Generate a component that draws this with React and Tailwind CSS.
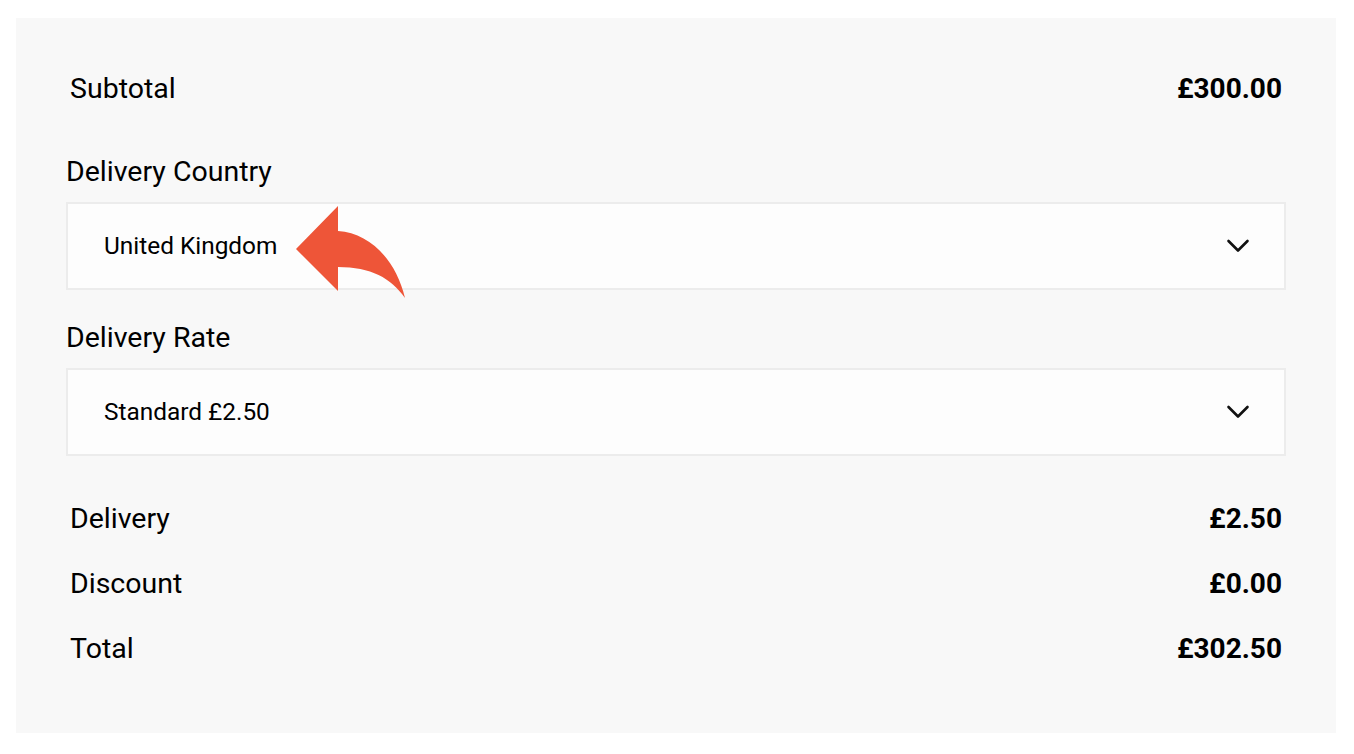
import React from 'react';

const Row = ({ label, value, className = '' }) => (
    <div className={`flex h-[40px] items-center justify-between px-1 pt-[2px] ${className}`}>
        <span className="text-[28.5px] text-black">{label}</span>
        <span className="text-[28px] font-bold text-black">{value}</span>
    </div>
);

const Chevron = () => (
    <svg width="24" height="14" viewBox="0 0 24 14" fill="none" stroke="#111" strokeWidth="2.6" strokeLinecap="round" strokeLinejoin="round">
        <polyline points="2.5,2 12,11.5 21.5,2" />
    </svg>
);

const SelectBox = ({ value, children }) => (
    <div className="relative mt-[10px] flex h-[88px] items-center justify-between border-2 border-[#ececec] bg-[#fdfdfd] pl-[36px] pr-[34px]">
        <span className="text-[24.4px] text-black">{value}</span>
        <Chevron />
        {children}
    </div>
);

const Arrow = () => (
    <svg className="absolute left-[227px] top-[1px]" width="112" height="96" viewBox="0 0 112 96">
        <path
            d="M1 44 L43 1 L43 26 C75 28 101 55 110 93 C96 73 76 62 43 62 L43 86 Z"
            fill="#ee5538"
        />
    </svg>
);

export default function App() {
    return (
        <div className="min-h-[754px] bg-white pt-[18px] font-['Roboto',sans-serif]">
            <div className="ml-[16px] mr-[18px] bg-[#f8f8f8] px-[50px] pt-[50px] pb-[65px]">
                <Row label="Subtotal" value="£300.00" />

                <div className="mt-[44px] flex h-[40px] items-center">
                    <span className="text-[28.5px] text-black">Delivery Country</span>
                </div>
                <SelectBox value="United Kingdom">
                    <Arrow />
                </SelectBox>

                <div className="mt-[28px] flex h-[40px] items-center">
                    <span className="text-[28.5px] text-black">Delivery Rate</span>
                </div>
                <SelectBox value="Standard £2.50" />

                <Row label="Delivery" value="£2.50" className="mt-[42px]" />
                <Row label="Discount" value="£0.00" className="mt-[25px]" />
                <Row label="Total" value="£302.50" className="mt-[25px]" />
            </div>
        </div>
    );
}
